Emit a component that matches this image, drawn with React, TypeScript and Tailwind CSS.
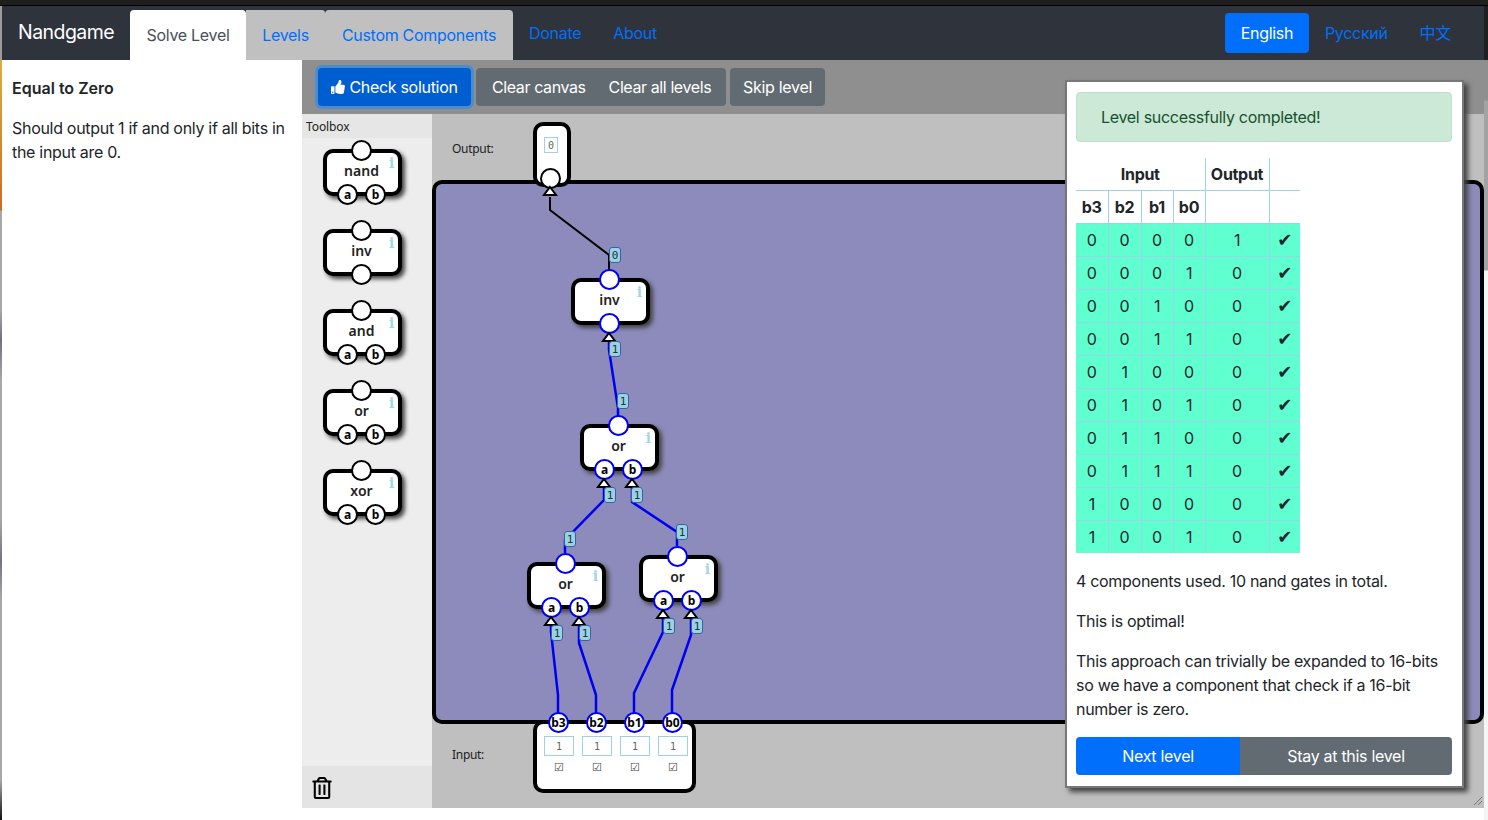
import React from "react";
import { FaThumbsUp, FaRegTrashAlt } from "react-icons/fa";

const OX = 432;
const OY = 114;
const BLUE = "#0000f0";

type NodeProps = { label: string; top?: boolean; ports?: string[]; bottom?: boolean; live?: boolean };

function Port({ text, live, className }: { text?: string; live?: boolean; className: string }) {
  return (
    <div
      className={`absolute flex h-[21px] w-[21px] items-center justify-center rounded-full border-2 bg-white text-[12px] font-bold leading-none tracking-normal text-black ${
        live ? "border-[#0000f0]" : "border-black"
      } ${className}`}
    >
      {text}
    </div>
  );
}

function Gate({ label, ports, bottom, live }: NodeProps) {
  return (
    <div className="relative h-[47px] w-[79px] rounded-[10px] border-[4px] border-black bg-white shadow-[3px_3px_4px_#444] font-['Noto_Sans',sans-serif]">
      <div className="pr-[2px] pt-[8px] text-center text-[14px] font-semibold leading-[20px] tracking-normal text-[#222]">{label}</div>
      <span className="absolute right-[4px] top-[2px] font-['DejaVu_Serif',serif] text-[14px] font-bold leading-[16px] text-[#a3d5e5]">i</span>
      <Port live={live} className="left-[24px] top-[-13px]" />
      {ports && <Port text={ports[0]} live={live} className="left-[10px] top-[31px]" />}
      {ports && <Port text={ports[1]} live={live} className="left-[38px] top-[31px]" />}
      {bottom && <Port live={live} className="left-[24px] top-[31px]" />}
    </div>
  );
}

function Placed({ x, y, children, z }: { x: number; y: number; children: React.ReactNode; z?: number }) {
  return (
    <div className="absolute" style={{ left: x - OX, top: y - OY, zIndex: z }}>
      {children}
    </div>
  );
}

function WireTag({ x, y, v }: { x: number; y: number; v: string }) {
  return (
    <div
      className="absolute flex h-[16px] w-[12px] items-center justify-center rounded-[3px] border border-[#3a5fa8] bg-[#9ad3df] font-['DejaVu_Sans_Mono',monospace] text-[11px] leading-none tracking-normal text-[#234]"
      style={{ left: x - 6 - OX, top: y - 8 - OY }}
    >
      {v}
    </div>
  );
}

const wires: { pts: string; live: boolean }[] = [
  { pts: "550,197 550,210 609,255 609,270", live: false },
  { pts: "609,342 609,350 618,408 618,416", live: true },
  { pts: "604,488 604,500 565,540 565,553", live: true },
  { pts: "632,488 632,502 677,532 677,546", live: true },
  { pts: "551,626 551,632 558,695 558,714", live: true },
  { pts: "579,626 579,643 596,695 596,714", live: true },
  { pts: "663,619 663,632 634,693 634,714", live: true },
  { pts: "691,619 691,635 672,690 672,714", live: true },
];
const arrows: [number, number][] = [
  [550, 187],
  [609, 333],
  [604, 479],
  [632, 479],
  [551, 617],
  [579, 617],
  [663, 610],
  [691, 610],
];
const tags: [number, number, string][] = [
  [615, 255, "0"],
  [615, 349, "1"],
  [623, 401, "1"],
  [610, 495, "1"],
  [637, 495, "1"],
  [570, 539, "1"],
  [682, 532, "1"],
  [557, 633, "1"],
  [585, 633, "1"],
  [669, 626, "1"],
  [697, 626, "1"],
];
const rows = [
  ["0", "0", "0", "0", "1"],
  ["0", "0", "0", "1", "0"],
  ["0", "0", "1", "0", "0"],
  ["0", "0", "1", "1", "0"],
  ["0", "1", "0", "0", "0"],
  ["0", "1", "0", "1", "0"],
  ["0", "1", "1", "0", "0"],
  ["0", "1", "1", "1", "0"],
  ["1", "0", "0", "0", "0"],
  ["1", "0", "0", "1", "0"],
];

function Toolbox() {
  const items: NodeProps[] = [
    { label: "nand", ports: ["a", "b"] },
    { label: "inv", bottom: true },
    { label: "and", ports: ["a", "b"] },
    { label: "or", ports: ["a", "b"] },
    { label: "xor", ports: ["a", "b"] },
  ];
  return (
    <div className="flex w-[130px] shrink-0 flex-col bg-[#ededed]">
      <div className="flex h-[24px] items-center bg-[#e6e6e6] pl-[4px] pt-[2px] font-['Noto_Sans',sans-serif] text-[12px] tracking-[-0.1px] text-[#222]">Toolbox</div>
      <div className="flex flex-1 flex-col gap-[33px] pl-[21px] pt-[11px]">
        {items.map((n) => (
          <Gate key={n.label} {...n} />
        ))}
      </div>
      <div className="flex h-[42px] items-center bg-[#e4e4e4] pl-[9px] pt-[2px] text-black">
        <FaRegTrashAlt size={22} />
      </div>
    </div>
  );
}

function Canvas() {
  return (
    <div className="relative flex-1 overflow-hidden bg-[#bfbfbf] font-['Noto_Sans',sans-serif] text-[12px] tracking-normal text-[#222]">
      <Placed x={452} y={140}>
        <span className="leading-[18px] tracking-[-0.3px]">Output:</span>
      </Placed>
      <Placed x={452} y={746}>
        <span className="leading-[18px] tracking-[-0.3px]">Input:</span>
      </Placed>
      <Placed x={432} y={180}>
        <div className="h-[544px] w-[1052px] rounded-[10px] border-[4px] border-black bg-[#8c8bbb]" />
      </Placed>

      <Placed x={533} y={122} z={1}>
        <div className="relative h-[65px] w-[38px] rounded-[10px] border-[4px] border-black bg-white">
          <div className="absolute left-[7px] top-[11px] flex h-[16px] w-[14px] items-center justify-center border border-[#9dd3e0] font-['DejaVu_Sans_Mono',monospace] text-[10px] text-[#666]">0</div>
          <Port className="left-[3px] top-[42px]" />
        </div>
      </Placed>

      <svg className="absolute left-0 top-0 z-[1]" width="1052" height="694" viewBox={`${OX} ${OY} 1052 694`}>
        {wires.map((w) => (
          <polyline key={w.pts} points={w.pts} fill="none" stroke={w.live ? BLUE : "#000"} strokeWidth={w.live ? 2.5 : 2} />
        ))}
      </svg>

      <Placed x={571} y={278} z={2}>
        <Gate label="inv" bottom live />
      </Placed>
      <Placed x={580} y={424} z={2}>
        <Gate label="or" ports={["a", "b"]} live />
      </Placed>
      <Placed x={527} y={562} z={2}>
        <Gate label="or" ports={["a", "b"]} live />
      </Placed>
      <Placed x={639} y={555} z={2}>
        <Gate label="or" ports={["a", "b"]} live />
      </Placed>

      <Placed x={533} y={720} z={2}>
        <div className="relative h-[73px] w-[163px] rounded-[10px] border-[4px] border-black bg-white">
          {["b3", "b2", "b1", "b0"].map((b, i) => (
            <div key={b} className="absolute top-[3px] w-[30px]" style={{ left: 7 + i * 38 }}>
              <Port text={b} live className="left-[4px] top-[-15px]" />
              <div className="mt-[9px] flex h-[20px] w-[30px] items-center justify-center border border-[#9dd3e0] font-['DejaVu_Sans_Mono',monospace] text-[10px] text-[#666]">1</div>
              <div className="mt-[3px] text-center font-['DejaVu_Sans',sans-serif] text-[11px] leading-[18px] text-[#444]">☑</div>
            </div>
          ))}
        </div>
      </Placed>

      <svg className="absolute left-0 top-0 z-[3]" width="1052" height="694" viewBox={`${OX} ${OY} 1052 694`}>
        {arrows.map(([x, y]) => (
          <polygon key={`${x}-${y}`} points={`${x},${y} ${x + 6},${y + 8} ${x - 6},${y + 8}`} fill="#fff" stroke="#000" strokeWidth={2} />
        ))}
      </svg>
      {tags.map(([x, y, v]) => (
        <div key={`${x}-${y}`} className="relative z-[3]">
          <WireTag x={x} y={y} v={v} />
        </div>
      ))}
      <svg className="absolute bottom-[2px] right-[1px]" width="10" height="10" viewBox="0 0 10 10">
        <path d="M1 9L9 1M5 9L9 5" stroke="#777" strokeWidth="1" />
      </svg>
    </div>
  );
}

function Modal() {
  const cell = "border-[#9bd3e8] px-0 text-center";
  return (
    <div className="absolute left-[1065px] top-[80px] z-10 h-[708px] w-[399px] border-2 border-[#777] bg-white pl-[9px] pr-[10px] pt-[10px] shadow-[4px_4px_5px_#444] text-[16px] leading-[24px] text-[#212529]">
      <div className="flex h-[50px] items-center rounded-[4px] border border-[#bde0c8] bg-[#cce8d6] pl-[24px] text-[#14522e]">Level successfully completed!</div>
      <table className="mt-[16px] table-fixed border-collapse">
        <colgroup>
          <col className="w-[32px]" />
          <col className="w-[33px]" />
          <col className="w-[32px]" />
          <col className="w-[32px]" />
          <col className="w-[64px]" />
          <col className="w-[31px]" />
        </colgroup>
        <thead>
          <tr className="h-[32px]">
            <th colSpan={4} className={`${cell} border-b font-bold`}>Input</th>
            <th className={`${cell} border-b border-l font-bold`}>Output</th>
            <th className={`${cell} border-b border-l`} />
          </tr>
          <tr className="h-[33px]">
            {["b3", "b2", "b1", "b0"].map((b, i) => (
              <th key={b} className={`${cell} border-b font-bold ${i ? "border-l" : ""}`}>{b}</th>
            ))}
            <th className={`${cell} border-b border-l`} />
            <th className={`${cell} border-b border-l`} />
          </tr>
        </thead>
        <tbody>
          {rows.map((r, ri) => (
            <tr key={ri} className="h-[33px] bg-[#5fffd0]">
              {r.map((v, i) => (
                <td key={i} className={`${cell} ${ri < 9 ? "border-b" : ""} ${i ? "border-l" : ""}`}>{v}</td>
              ))}
              <td className={`${cell} ${ri < 9 ? "border-b" : ""} border-l font-['DejaVu_Sans',sans-serif] text-[18px]`}>✔</td>
            </tr>
          ))}
        </tbody>
      </table>
      <p className="mt-[16px]">4 components used. 10 nand gates in total.</p>
      <p className="mt-[16px]">This is optimal!</p>
      <p className="mt-[16px]">This approach can trivially be expanded to 16-bits so we have a component that check if a 16-bit number is zero.</p>
      <div className="mt-[16px] flex h-[38px] overflow-hidden rounded-[4px] text-white">
        <div className="flex w-[164px] items-center justify-center bg-[#006ffb]">Next level</div>
        <div className="flex flex-1 items-center justify-center bg-[#626b72]">Stay at this level</div>
      </div>
    </div>
  );
}

export default function App() {
  return (
    <div className="relative flex h-[820px] w-[1488px] flex-col overflow-hidden bg-white font-['Inter','Noto_Sans_CJK_SC',sans-serif] text-[16px] tracking-[-0.3px] text-[#212529]">
      <div className="h-[6px] shrink-0 border-b border-black bg-[#1f1f1f]" />
      <nav className="flex h-[54px] shrink-0 bg-[#2e333c]">
        <div className="w-[2px] shrink-0 bg-[#9c9c9c]" />
        <div className="ml-[16px] flex h-[54px] w-[112px] items-center text-[19.5px] tracking-[-0.55px] text-white">Nandgame</div>
        <div className="mt-[4px] flex h-[50px]">
          <div className="flex w-[116px] items-center justify-center rounded-t-[4px] bg-white text-[#495057]">Solve Level</div>
          <div className="flex w-[79px] items-center justify-center rounded-tr-[3px] bg-[#c0c0c0] text-[#006ffb]">Levels</div>
          <div className="flex w-[188px] items-center justify-center rounded-t-[4px] bg-[#c0c0c0] text-[#006ffb]">Custom Components</div>
        </div>
        <div className="ml-[16px] flex items-center gap-[32px] text-[#006ffb]">
          <span>Donate</span>
          <span>About</span>
        </div>
        <div className="ml-auto mr-[33px] flex items-center text-[#006ffb]">
          <div className="flex h-[40px] w-[84px] items-center justify-center rounded-[4px] bg-[#006ffb] text-white">English</div>
          <span className="ml-[16px]">Русский</span>
          <span className="ml-[32px]">中文</span>
        </div>
        <div className="w-[4px] bg-[#1f1f1f]" />
      </nav>
      <div className="flex min-h-0 flex-1">
        <div className="w-[2px] shrink-0 bg-[linear-gradient(180deg,#d8b040_0px,#d06a20_150px,#a8a8a8_151px,#a8a8a8_250px,#6e7280_280px,#a8a8a8_320px,#a8a8a8_460px,#70747f_500px,#a8a8a8_540px,#a8a8a8_720px,#111_760px)]" />
        <aside className="w-[300px] shrink-0 pl-[10px] pr-[12px] pt-[16px]">
          <h1 className="font-semibold leading-[24px] tracking-normal">Equal to Zero</h1>
          <p className="mt-[16px] leading-[24px]">Should output 1 if and only if all bits in the input are 0.</p>
        </aside>
        <div className="flex min-w-0 flex-1 flex-col pb-[12px]">
          <div className="flex h-[54px] shrink-0 items-center bg-[#8f8f8f] pl-[16px] text-white">
            <div className="flex h-[38px] w-[153px] items-center justify-center gap-[4px] rounded-[4px] bg-[#005fd0] shadow-[0_0_0_3px_#4b8ccf]">
              <FaThumbsUp size={14} />
              <span>Check solution</span>
            </div>
            <div className="ml-[5px] flex h-[38px] w-[250px] items-center rounded-[4px] bg-[#626b72] pl-[16px] tracking-[-0.4px]">
              <span>Clear canvas</span>
              <span className="ml-[23px]">Clear all levels</span>
            </div>
            <div className="ml-[4px] flex h-[38px] w-[95px] items-center justify-center rounded-[4px] bg-[#626b72]">Skip level</div>
          </div>
          <div className="flex min-h-0 flex-1">
            <Toolbox />
            <Canvas />
          </div>
        </div>
        <div className="w-[4px] shrink-0 bg-[linear-gradient(180deg,#8f8f8f_0px,#8f8f8f_40px,#a3a3a3_41px,#a3a3a3_210px,#f5f5f5_211px)]" />
      </div>
      <Modal />
    </div>
  );
}
